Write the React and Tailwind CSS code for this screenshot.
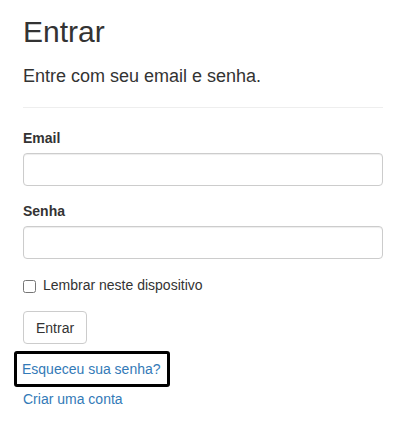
import React from 'react';

const App = () => {
    return (
        <div className="min-h-[429px] w-full bg-white px-[23px] text-[#333] font-['Liberation_Sans',Arial,sans-serif]">
            {/* Page header */}
            <h2 className="pt-[15px] text-[30px] leading-[33px] font-normal">Entrar</h2>
            <h4 className="mt-[18px] text-[18px] leading-[20px] font-normal">Entre com seu email e senha.</h4>
            <hr className="mt-[21px] w-[360px] border-0 border-t border-[#eee]" />

            <form className="w-[360px]" onSubmit={(e) => e.preventDefault()}>
                {/* Email */}
                <div className="mt-[20px]">
                    <label className="block text-[14px] leading-[20px] font-bold mb-[5px]">Email</label>
                    <input
                        type="email"
                        className="block h-[33px] w-full rounded-[4px] border border-[#ccc] px-3 text-[14px] shadow-[inset_0_1px_1px_rgba(0,0,0,0.075)] outline-none"
                    />
                </div>

                {/* Senha */}
                <div className="mt-[15px]">
                    <label className="block text-[14px] leading-[20px] font-bold mb-[5px]">Senha</label>
                    <input
                        type="password"
                        className="block h-[33px] w-full rounded-[4px] border border-[#ccc] px-3 text-[14px] shadow-[inset_0_1px_1px_rgba(0,0,0,0.075)] outline-none"
                    />
                </div>

                {/* Remember me */}
                <label className="mt-[16px] flex items-start gap-[7px] text-[14px] leading-[20px]">
                    <input type="checkbox" className="mt-[5px] ml-0 h-[13px] w-[13px]" />
                    <span>Lembrar neste dispositivo</span>
                </label>

                <button
                    type="submit"
                    className="mt-[16px] h-[33px] rounded-[4px] border border-[#ccc] bg-white px-[12px] text-[14px] leading-[20px] text-[#333]"
                >
                    Entrar
                </button>
            </form>

            {/* Links */}
            <div className="mt-[7px] ml-[-9px] w-fit rounded-[3px] border-[3px] border-black pl-[5px] pr-[6px] py-[5px] text-[14px] leading-[20px]">
                <a href="#" className="text-[#337ab7]">Esqueceu sua senha?</a>
            </div>
            <div className="mt-[2px] text-[14px] leading-[20px]">
                <a href="#" className="text-[#337ab7]">Criar uma conta</a>
            </div>
        </div>
    );
};

export default App;
